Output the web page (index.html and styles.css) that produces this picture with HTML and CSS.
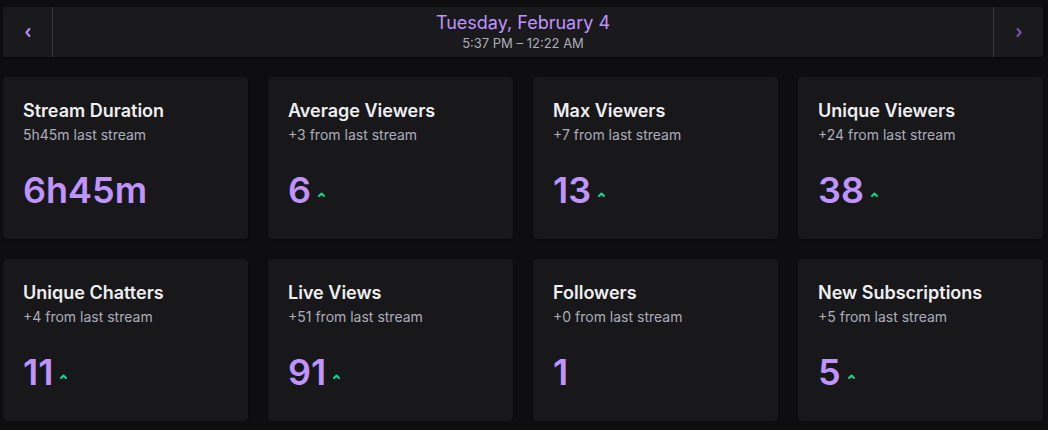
FILE: index.html
```html
<!DOCTYPE html>
<html lang="en">
<head>
<meta charset="utf-8">
<title>Stream Stats</title>
<link rel="stylesheet" href="styles.css">
</head>
<body>
<div class="page">
  <header class="datebar">
    <button class="nav nav-prev" aria-label="Previous stream">
      <svg width="6" height="9" viewBox="0 0 6 9"><path d="M4.4 1 L1.4 4.5 L4.4 8" fill="none" stroke="currentColor" stroke-width="2" stroke-linecap="round" stroke-linejoin="round"/></svg>
    </button>
    <div class="date">
      <div class="date-title">Tuesday, February 4</div>
      <div class="date-sub">5:37 PM – 12:22 AM</div>
    </div>
    <button class="nav nav-next" aria-label="Next stream">
      <svg width="6" height="9" viewBox="0 0 6 9"><path d="M1.6 1 L4.6 4.5 L1.6 8" fill="none" stroke="currentColor" stroke-width="2" stroke-linecap="round" stroke-linejoin="round"/></svg>
    </button>
  </header>

  <section class="grid">
    <div class="card">
      <div class="card-title">Stream Duration</div>
      <div class="card-sub">5h45m last stream</div>
      <div class="card-value"><span class="num">6h45m</span></div>
    </div>
    <div class="card">
      <div class="card-title">Average Viewers</div>
      <div class="card-sub">+3 from last stream</div>
      <div class="card-value"><span class="num">6</span><svg class="up" width="7" height="5" viewBox="0 0 7 5"><path d="M1 4 L3.5 1.5 L6 4" fill="none" stroke="currentColor" stroke-width="1.8" stroke-linecap="round" stroke-linejoin="round"/></svg></div>
    </div>
    <div class="card">
      <div class="card-title">Max Viewers</div>
      <div class="card-sub">+7 from last stream</div>
      <div class="card-value"><span class="num">13</span><svg class="up" width="7" height="5" viewBox="0 0 7 5"><path d="M1 4 L3.5 1.5 L6 4" fill="none" stroke="currentColor" stroke-width="1.8" stroke-linecap="round" stroke-linejoin="round"/></svg></div>
    </div>
    <div class="card">
      <div class="card-title">Unique Viewers</div>
      <div class="card-sub">+24 from last stream</div>
      <div class="card-value"><span class="num">38</span><svg class="up" width="7" height="5" viewBox="0 0 7 5"><path d="M1 4 L3.5 1.5 L6 4" fill="none" stroke="currentColor" stroke-width="1.8" stroke-linecap="round" stroke-linejoin="round"/></svg></div>
    </div>
    <div class="card">
      <div class="card-title">Unique Chatters</div>
      <div class="card-sub">+4 from last stream</div>
      <div class="card-value"><span class="num">11</span><svg class="up" width="7" height="5" viewBox="0 0 7 5"><path d="M1 4 L3.5 1.5 L6 4" fill="none" stroke="currentColor" stroke-width="1.8" stroke-linecap="round" stroke-linejoin="round"/></svg></div>
    </div>
    <div class="card">
      <div class="card-title">Live Views</div>
      <div class="card-sub">+51 from last stream</div>
      <div class="card-value"><span class="num">91</span><svg class="up" width="7" height="5" viewBox="0 0 7 5"><path d="M1 4 L3.5 1.5 L6 4" fill="none" stroke="currentColor" stroke-width="1.8" stroke-linecap="round" stroke-linejoin="round"/></svg></div>
    </div>
    <div class="card">
      <div class="card-title">Followers</div>
      <div class="card-sub">+0 from last stream</div>
      <div class="card-value"><span class="num">1</span></div>
    </div>
    <div class="card">
      <div class="card-title">New Subscriptions</div>
      <div class="card-sub">+5 from last stream</div>
      <div class="card-value"><span class="num">5</span><svg class="up" width="7" height="5" viewBox="0 0 7 5"><path d="M1 4 L3.5 1.5 L6 4" fill="none" stroke="currentColor" stroke-width="1.8" stroke-linecap="round" stroke-linejoin="round"/></svg></div>
    </div>
  </section>
</div>
</body>
</html>
```

FILE: styles.css
```css
* { box-sizing: border-box; }

html, body {
  margin: 0;
  padding: 0;
  background: #0e0e10;
}

body {
  font-family: Inter, "Noto Sans", "Liberation Sans", sans-serif;
  color: #efeff1;
}

.page {
  width: 1040px;
  margin: 0 0 0 3px;
  padding-top: 7px;
}

.datebar {
  display: flex;
  height: 50px;
  background: #1a1a1d;
  box-shadow: 0 1px 2px rgba(0, 0, 0, 0.5);
}

.nav {
  width: 50px;
  flex: 0 0 50px;
  background: transparent;
  border: 0;
  padding: 0;
  display: flex;
  align-items: center;
  justify-content: center;
  cursor: pointer;
}

.nav-prev {
  color: #b68cf5;
  border-right: 1px solid #3a3a3d;
}

.nav-next {
  color: #7654b0;
  border-left: 1px solid #3a3a3d;
}

.date {
  flex: 1;
  display: flex;
  flex-direction: column;
  align-items: center;
  padding-top: 5px;
}

.date-title {
  font-size: 18px;
  line-height: 22px;
  color: #bf94ff;
}

.date-sub {
  font-size: 13px;
  line-height: 16px;
  margin-top: 1px;
  color: #adadb8;
}

.grid {
  display: grid;
  grid-template-columns: repeat(4, 245px);
  gap: 20px;
  margin-top: 20px;
}

.card {
  height: 162px;
  background: #18181b;
  border-radius: 4px;
  padding: 23px 20px 0;
  box-shadow: 0 1px 2px rgba(0, 0, 0, 0.4);
}

.card-title {
  font-size: 18px;
  line-height: 22px;
  font-weight: 600;
  color: #efeff1;
}

.card-sub {
  font-size: 14px;
  line-height: 20px;
  margin-top: 3px;
  color: #adadb8;
}

.card-value {
  display: flex;
  align-items: center;
  margin-top: 24px;
  height: 43px;
}

.num {
  font-size: 36px;
  line-height: 43px;
  font-weight: 600;
  color: #bf94ff;
}

.up {
  color: #00e58f;
  margin-left: 7px;
  margin-top: 8px;
}
```
